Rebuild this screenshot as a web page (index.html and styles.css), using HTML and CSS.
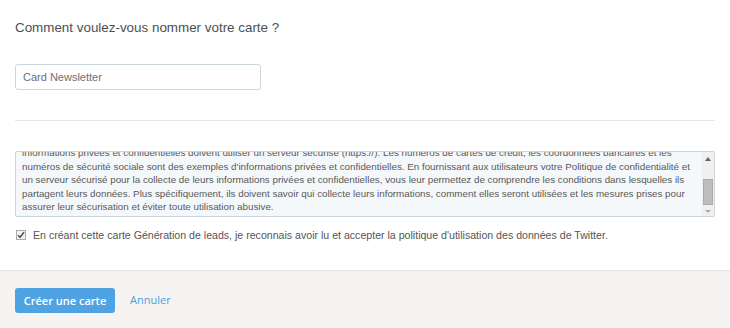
FILE: index.html
```html
<!DOCTYPE html>
<html lang="fr">
<head>
    <meta charset="utf-8" />
    <title>Créer une carte</title>
    <link rel="stylesheet" href="styles.css">
</head>
<body>
    <div class="main">
        <h1 class="title">Comment voulez-vous nommer votre carte ?</h1>

        <div class="name-field">Card Newsletter</div>

        <hr class="sep" />

        <div class="terms">
            <div class="terms-text">
                <p>informations privées et confidentielles doivent utiliser un serveur sécurisé (https://). Les numéros de cartes de crédit, les coordonnées bancaires et les<br>
                numéros de sécurité sociale sont des exemples d'informations privées et confidentielles. En fournissant aux utilisateurs votre Politique de confidentialité et<br>
                un serveur sécurisé pour la collecte de leurs informations privées et confidentielles, vous leur permettez de comprendre les conditions dans lesquelles ils<br>
                partagent leurs données. Plus spécifiquement, ils doivent savoir qui collecte leurs informations, comment elles seront utilisées et les mesures prises pour<br>
                assurer leur sécurisation et éviter toute utilisation abusive.</p>
            </div>
            <div class="scrollbar">
                <span class="arrow up"></span>
                <span class="thumb"></span>
                <span class="arrow down"></span>
            </div>
        </div>

        <label class="agree">
            <span class="check">
                <svg width="8" height="8" viewBox="0 0 8 8"><path d="M1 4.2 L3 6.2 L7 1.2" fill="none" stroke="#555" stroke-width="1.6"/></svg>
            </span>
            En créant cette carte Génération de leads, je reconnais avoir lu et accepter la politique d'utilisation des données de Twitter.
        </label>
    </div>

    <footer class="actions">
        <button type="button" class="btn-primary">Créer une carte</button>
        <a class="cancel" href="#">Annuler</a>
    </footer>
</body>
</html>
```

FILE: styles.css
```css
body {
    margin: 0;
    font-family: "Liberation Sans", Arial, sans-serif;
    background: #fff;
    width: 730px;
    height: 328px;
    overflow: hidden;
}

.main {
    padding: 19px 15px 0 15px;
    height: 251px;
}

.title {
    margin: 0;
    font-size: 13.4px;
    font-weight: normal;
    color: #4a4f55;
    line-height: 18px;
}

.name-field {
    margin-top: 27px;
    width: 230px;
    height: 24px;
    border: 1px solid #ccd6dd;
    border-radius: 3px;
    padding: 0 7px;
    font-size: 11px;
    line-height: 24px;
    color: #707070;
}

.sep {
    margin: 30px 0 0 0;
    border: 0;
    border-top: 1px solid #e1e8ed;
    height: 0;
}

.terms {
    margin-top: 30px;
    height: 64px;
    border: 1px solid #ccd6dd;
    border-radius: 2px;
    background: #f5f8fa;
    display: flex;
}

.terms-text {
    flex: 1;
    overflow: hidden;
    padding: 0 4px 0 6px;
}

.terms-text p {
    margin: -6px 0 0 0;
    font-size: 9.8px;
    line-height: 13.5px;
    color: #585858;
    white-space: nowrap;
}

.scrollbar {
    width: 12px;
    display: flex;
    flex-direction: column;
    align-items: center;
    background: #f0f0f0;
}

.arrow {
    width: 0;
    height: 0;
    border-left: 3px solid transparent;
    border-right: 3px solid transparent;
}

.arrow.up {
    margin-top: 5px;
    border-bottom: 4px solid #666;
}

.arrow.down {
    margin-top: 5px;
    border-top: 3px solid #aaa;
}

.thumb {
    margin-top: 18px;
    width: 8px;
    height: 24px;
    background: #bdbdbd;
    border: 1px solid #aaa;
}

.agree {
    display: flex;
    align-items: center;
    margin-top: 12px;
    font-size: 10.6px;
    color: #555;
}

.check {
    width: 8px;
    height: 8px;
    border: 1px solid #aaa;
    background: #f4f4f4;
    margin: 0 7px 0 1px;
    display: flex;
    align-items: center;
    justify-content: center;
}

.actions {
    height: 58px;
    border-top: 1px solid #e6e4e2;
    background: #f6f4f2;
    display: flex;
    align-items: center;
    padding: 0 15px;
    box-sizing: border-box;
}

.btn-primary {
    width: 100px;
    height: 25px;
    margin-top: 1px;
    border: 0;
    border-radius: 3px;
    background: #4fa3e3;
    color: #fff;
    font-family: "Open Sans", sans-serif;
    font-weight: 600;
    font-size: 11px;
}

.cancel {
    margin-left: 15px;
    font-family: "Open Sans", sans-serif;
    font-size: 11px;
    color: #4a9ee0;
    text-decoration: none;
}
```
